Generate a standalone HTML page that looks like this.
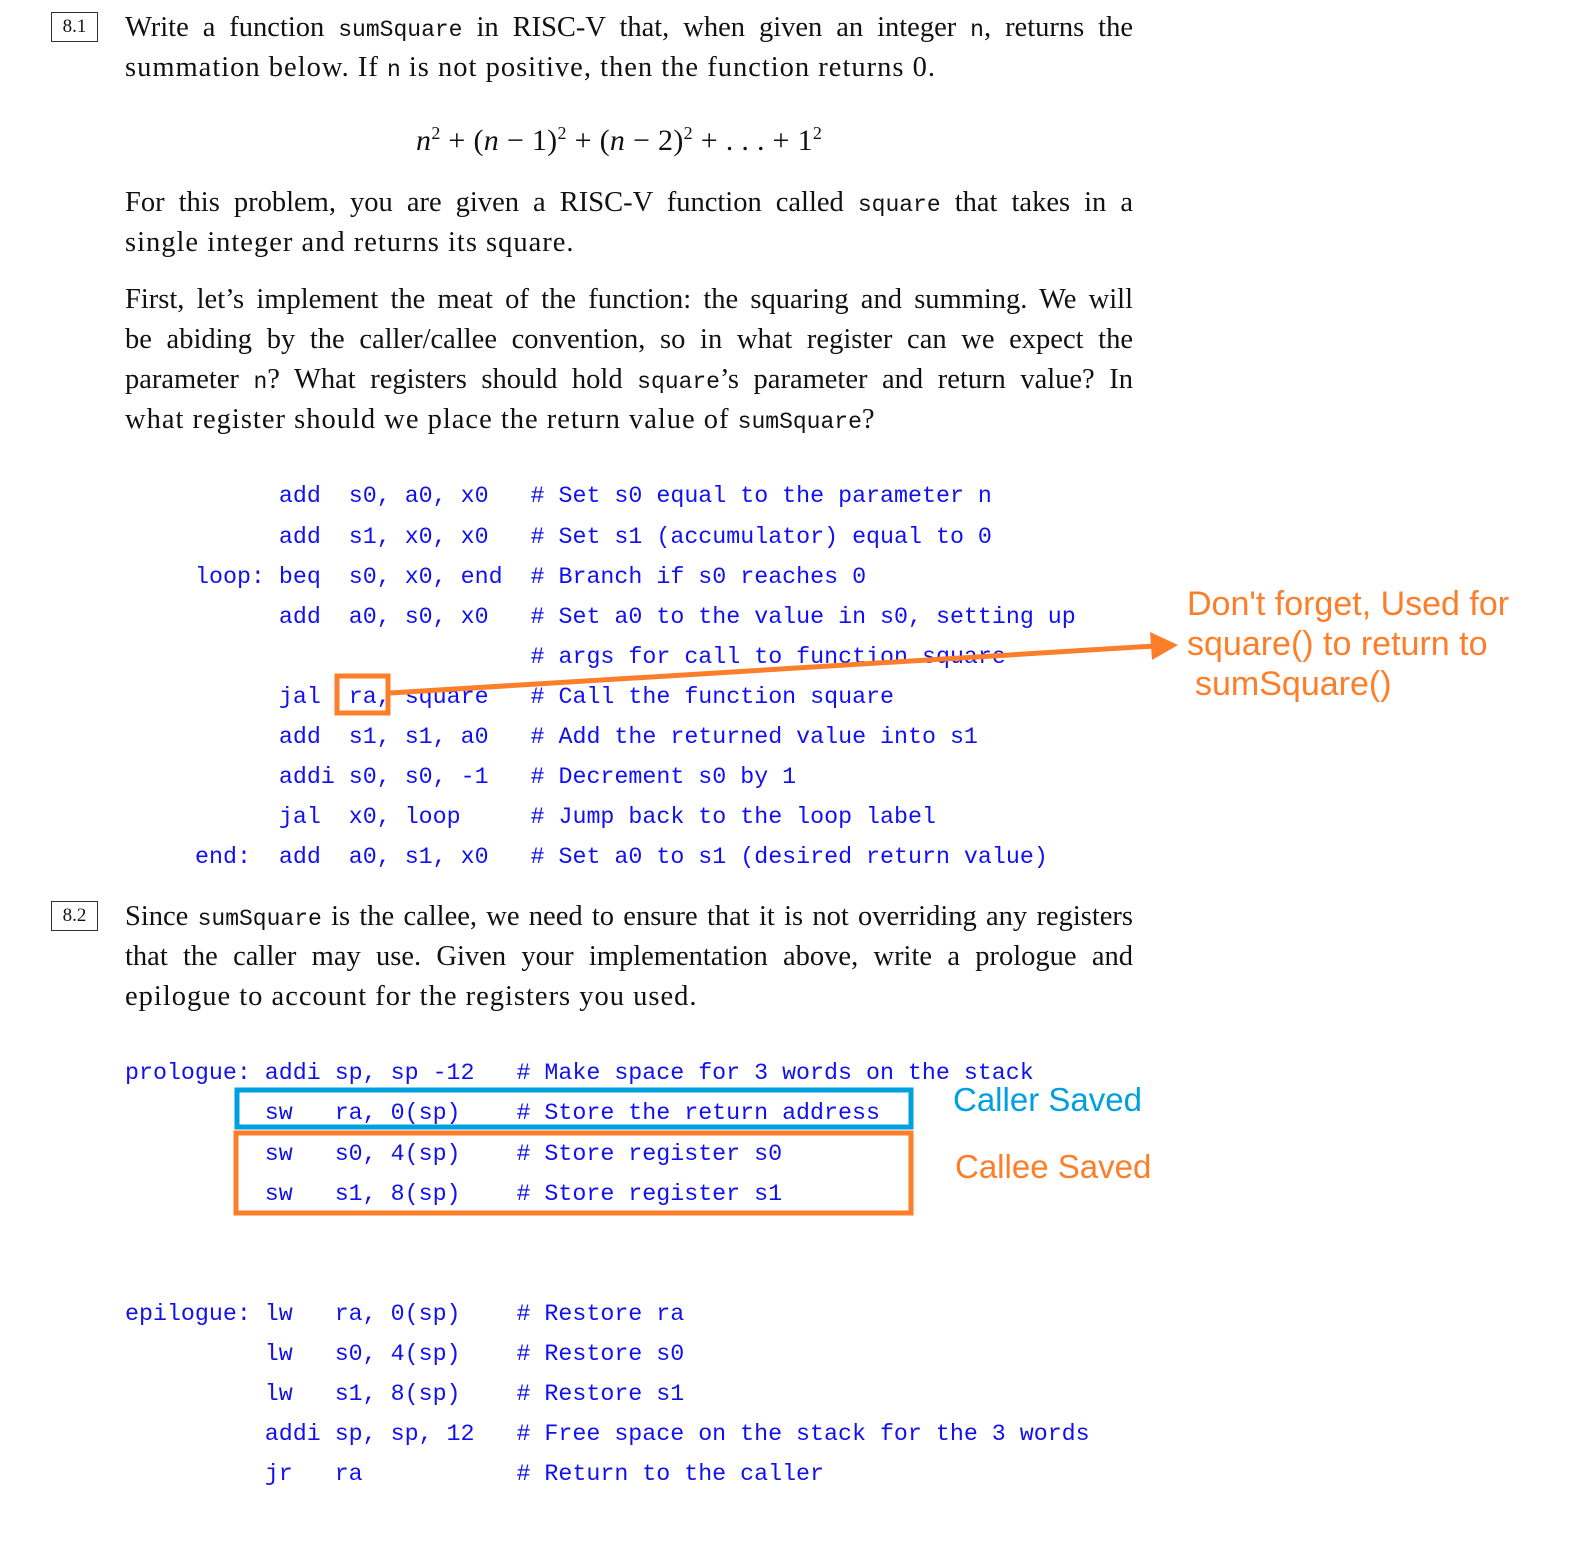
<!DOCTYPE html>
<html><head><meta charset="utf-8"><style>
body{margin:0;width:1575px;height:1548px;background:#fff;position:relative;overflow:hidden;font-family:"Liberation Serif",serif;color:#111}
.l{position:absolute;left:125px;width:1005px;height:40px;line-height:40px;font-size:28.5px;letter-spacing:1px;white-space:nowrap}
.j{text-align:justify;text-align-last:justify;letter-spacing:0;width:1008px}
.m{font-family:"Liberation Mono",monospace;font-size:23px;letter-spacing:0}
.c{position:absolute;height:40px;line-height:40px;font-family:"Liberation Mono",monospace;font-size:23.3px;color:#1010f0;white-space:pre;margin:0}
.box{position:absolute;border:1.5px solid #333;font-size:19px;text-align:center;line-height:28px;width:45px;height:28px}
.a{position:absolute;font-family:"Liberation Sans","Noto Sans CJK SC",sans-serif;font-size:33px;line-height:40px;color:#fd7e2a;white-space:nowrap}
sup{font-size:18px}
</style></head><body>
<div class="box" style="left:51px;top:12px">8.1</div>
<div class="l j" style="top:8px">Write a function <span class="m">sumSquare</span> in RISC-V that, when given an integer <span class="m">n</span>, returns the</div>
<div class="l" style="top:48px">summation below. If <span class="m">n</span> is not positive, then the function returns 0.</div>
<div class="l" style="top:113px;left:416px;width:auto;font-size:30px;letter-spacing:0.3px"><i>n</i><sup>2</sup> + (<i>n</i> − 1)<sup>2</sup> + (<i>n</i> − 2)<sup>2</sup> + . . . + 1<sup>2</sup></div>
<div class="l j" style="top:183px">For this problem, you are given a RISC-V function called <span class="m">square</span> that takes in a</div>
<div class="l" style="top:223px">single integer and returns its square.</div>
<div class="l j" style="top:280px">First, let’s implement the meat of the function: the squaring and summing. We will</div>
<div class="l j" style="top:320px">be abiding by the caller/callee convention, so in what register can we expect the</div>
<div class="l j" style="top:360px">parameter <span class="m">n</span>? What registers should hold <span class="m">square</span>’s parameter and return value? In</div>
<div class="l" style="top:400px">what register should we place the return value of <span class="m">sumSquare</span>?</div>

<pre class="c" style="left:195px;top:476px">      add  s0, a0, x0   # Set s0 equal to the parameter n</pre>
<pre class="c" style="left:195px;top:517px">      add  s1, x0, x0   # Set s1 (accumulator) equal to 0</pre>
<pre class="c" style="left:195px;top:557px">loop: beq  s0, x0, end  # Branch if s0 reaches 0</pre>
<pre class="c" style="left:195px;top:597px">      add  a0, s0, x0   # Set a0 to the value in s0, setting up</pre>
<pre class="c" style="left:195px;top:637px">                        # args for call to function square</pre>
<pre class="c" style="left:195px;top:677px">      jal  ra, square   # Call the function square</pre>
<pre class="c" style="left:195px;top:717px">      add  s1, s1, a0   # Add the returned value into s1</pre>
<pre class="c" style="left:195px;top:757px">      addi s0, s0, -1   # Decrement s0 by 1</pre>
<pre class="c" style="left:195px;top:797px">      jal  x0, loop     # Jump back to the loop label</pre>
<pre class="c" style="left:195px;top:837px">end:  add  a0, s1, x0   # Set a0 to s1 (desired return value)</pre>

<svg style="position:absolute;left:0;top:0" width="1575" height="1548">
<rect x="337" y="676" width="51" height="37" fill="none" stroke="#fd7e2a" stroke-width="5"/>
<line x1="390" y1="693" x2="1155" y2="646" stroke="#fd7e2a" stroke-width="5"/>
<polygon points="1178,645 1150,632 1152,660" fill="#fd7e2a"/>
<rect x="237" y="1090" width="674" height="37" fill="none" stroke="#00a0e0" stroke-width="5"/>
<rect x="236" y="1133" width="675" height="80" fill="none" stroke="#fd7e2a" stroke-width="5"/>
</svg>
<div class="a" style="left:1187px;top:584px;font-size:34px">Don't forget, Used for</div>
<div class="a" style="left:1187px;top:624px;font-size:34px">square() to return to</div>
<div class="a" style="left:1195px;top:664px;font-size:34px">sumSquare()</div>

<div class="box" style="left:51px;top:901px">8.2</div>
<div class="l j" style="top:897px">Since <span class="m">sumSquare</span> is the callee, we need to ensure that it is not overriding any registers</div>
<div class="l j" style="top:937px">that the caller may use. Given your implementation above, write a prologue and</div>
<div class="l" style="top:977px">epilogue to account for the registers you used.</div>

<pre class="c" style="left:125px;top:1053px">prologue: addi sp, sp -12   # Make space for 3 words on the stack</pre>
<pre class="c" style="left:125px;top:1093px">          sw   ra, 0(sp)    # Store the return address</pre>
<pre class="c" style="left:125px;top:1134px">          sw   s0, 4(sp)    # Store register s0</pre>
<pre class="c" style="left:125px;top:1174px">          sw   s1, 8(sp)    # Store register s1</pre>
<div class="a" style="left:953px;top:1080px;color:#00a0e0">Caller Saved</div>
<div class="a" style="left:955px;top:1147px">Callee Saved</div>

<pre class="c" style="left:125px;top:1294px">epilogue: lw   ra, 0(sp)    # Restore ra</pre>
<pre class="c" style="left:125px;top:1334px">          lw   s0, 4(sp)    # Restore s0</pre>
<pre class="c" style="left:125px;top:1374px">          lw   s1, 8(sp)    # Restore s1</pre>
<pre class="c" style="left:125px;top:1414px">          addi sp, sp, 12   # Free space on the stack for the 3 words</pre>
<pre class="c" style="left:125px;top:1454px">          jr   ra           # Return to the caller</pre>
</body></html>
